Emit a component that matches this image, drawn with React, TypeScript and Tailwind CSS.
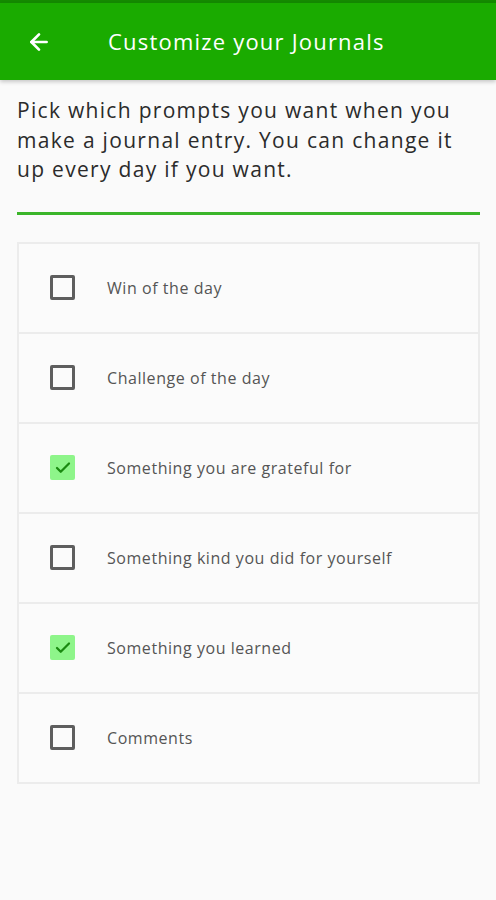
import { ArrowLeft, Check } from "lucide-react"

const prompts = [
  { label: "Win of the day", checked: false },
  { label: "Challenge of the day", checked: false },
  { label: "Something you are grateful for", checked: true },
  { label: "Something kind you did for yourself", checked: false },
  { label: "Something you learned", checked: true },
  { label: "Comments", checked: false },
]

const PromptRow = ({ label, checked, last }: { label: string; checked: boolean; last: boolean }) => {
  return (
    <div className={`flex items-center ${last ? "h-[88px]" : "h-[90px] border-b-2 border-[#ececec]"}`}>
      <div className="w-[88px] flex justify-start pl-[31px]">
        {checked ? (
          <div className="w-[25px] h-[25px] rounded-[2px] bg-[#8ef58a] flex items-center justify-center">
            <Check className="w-[18px] h-[18px] text-[#1a8a10]" strokeWidth={3} />
          </div>
        ) : (
          <div className="w-[25px] h-[25px] rounded-[2px] border-[3px] border-[#5e5e5e]" />
        )}
      </div>
      <div className="text-[16px] text-[#555555] tracking-[0.55px]">{label}</div>
    </div>
  )
}

export default function App() {
  return (
    <div className="w-[496px] h-[900px] bg-[#fafafa] font-['Open_Sans','Lato',sans-serif]">
      <div className="h-[3px] bg-[#148a00]" />
      <div className="h-[77px] bg-[#1aab00] flex items-center shadow-[0_2px_4px_rgba(0,0,0,0.2)]">
        <div className="w-[108px] pl-[26px]">
          <ArrowLeft className="w-[26px] h-[26px] text-white" strokeWidth={2.5} />
        </div>
        <div className="text-white text-[22px] tracking-[1.2px]">Customize your Journals</div>
      </div>
      <div className="pl-[17px] pr-[16px]">
        <p className="mt-[16px] max-w-[456px] text-[21px] leading-[29.5px] text-[#2b2b2b] tracking-[1.3px]">
          Pick which prompts you want when you make a journal entry. You can change it up every day if you want.
        </p>
        <div className="mt-[27px] h-[3px] bg-[#3bb52a]" />
        <div className="mt-[27px] border-2 border-[#ececec] bg-[#fbfbfb]">
          {prompts.map((p, i) => (
            <PromptRow key={p.label} label={p.label} checked={p.checked} last={i === prompts.length - 1} />
          ))}
        </div>
      </div>
    </div>
  )
}
